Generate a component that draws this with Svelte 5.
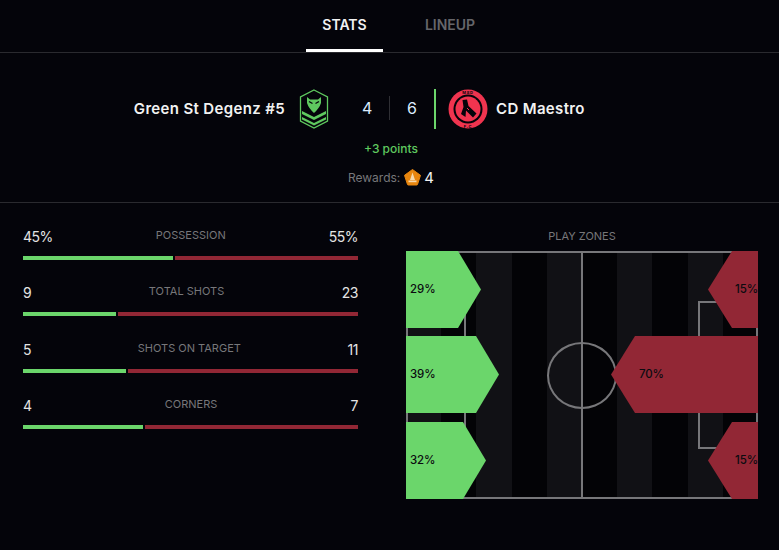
<script>
  const stats = [
    { label: 'Possession', a: '45%', b: '55%', green: 150 },
    { label: 'Total shots', a: '9', b: '23', green: 93 },
    { label: 'Shots on target', a: '5', b: '11', green: 103 },
    { label: 'Corners', a: '4', b: '7', green: 120 }
  ];
  const zones = [
    { cls: 'g', w: 75, top: 0, t: '29%' },
    { cls: 'g', w: 93, top: 85, t: '39%' },
    { cls: 'g', w: 80, top: 171, t: '32%' },
    { cls: 'r', w: 50, top: 0, t: '15%' },
    { cls: 'r mid', w: 147, top: 85, t: '70%' },
    { cls: 'r', w: 50, top: 171, t: '15%' }
  ];
</script>

<div class="page">
  <nav class="tabs">
    <span class="tab active">STATS</span>
    <span class="tab">LINEUP</span>
  </nav>

  <section class="match">
    <div class="teams">
      <div class="team home">
        <span class="name">Green St Degenz #5</span>
        <svg width="30" height="40" viewBox="0 0 30 40" class="badge">
          <path d="M15 1 L28.5 8 V32 L15 39 L1.5 32 V8 Z" fill="none" stroke="#5fc95f" stroke-width="1.3"/>
          <path d="M8 8 L11 10.5 H19 L22 8 L22 14 Q20.5 19 15 24 Q9.5 19 8 14 Z" fill="#5fc95f"/>
          <path d="M10 12.5 L13.5 14.5 M20 12.5 L16.5 14.5" stroke="#04040a" stroke-width="1.4"/>
          <path d="M3 22 L15 28 L27 22 V25 L15 31 L3 25 Z M3 28 L15 34 L27 28 V30.5 L15 36.5 L3 30.5 Z" fill="#5fc95f"/>
        </svg>
      </div>
      <div class="score">
        <span class="num">4</span>
        <i class="sep"></i>
        <span class="num">6</span>
      </div>
      <div class="team away">
        <svg width="40" height="40" viewBox="0 0 40 40">
          <circle cx="20" cy="20" r="19.5" fill="#f0344f"/>
          <circle cx="20" cy="20" r="14.5" fill="#04040a"/>
          <circle cx="20" cy="20" r="12.5" fill="#f0344f"/>
          <path d="M14.5 11 L19 10.5 L20.5 17 L28.5 24.5 L25 28.5 L18 21.5 L17.5 28 L13 25 L15.5 18 Z" fill="#04040a"/>
          <path d="M19 19 L21 21" stroke="#f0344f" stroke-width="1"/>
          <text x="20" y="5" class="mini">MSD</text>
          <text x="20" y="38.6" class="mini">F.C</text>
        </svg>
        <span class="name">CD Maestro</span>
      </div>
    </div>
    <div class="points">+3 points</div>
    <div class="rewards">
      <span>Rewards:</span>
      <svg width="17" height="17" viewBox="0 0 17 17">
        <path d="M8.5 .5 L16.5 6.3 L13.5 15.5 Q13.3 16 12.8 16 H4.2 Q3.7 16 3.5 15.5 L.5 6.3 Z" fill="#e8860f" stroke="#e8860f" stroke-linejoin="round"/>
        <path d="M8.5 3.5 L11 11 H6 Z" fill="#f6d9ad"/>
        <path d="M4.5 11.5 H12.5 V13.2 H4.5 Z" fill="#f6d9ad"/>
      </svg>
      <b>4</b>
    </div>
  </section>

  <section class="body">
    <div class="stats">
      {#each stats as s}
        <div class="row">
          <div class="line">
            <span class="val">{s.a}</span>
            <span class="lbl">{s.label}</span>
            <span class="val">{s.b}</span>
          </div>
          <div class="bar">
            <i class="bg" style="width:{s.green}px"></i>
            <i class="br"></i>
          </div>
        </div>
      {/each}
    </div>

    <div class="zones">
      <div class="ztitle">PLAY ZONES</div>
      <div class="pitch">
        <div class="stripes">
          {#each Array(10) as _, i}
            <i class:alt={i % 2 === 0}></i>
          {/each}
        </div>
        <i class="outline"></i>
        <i class="halfway"></i>
        <i class="circle"></i>
        <i class="box left"></i>
        <i class="box right"></i>
        {#each zones as z}
          <div class="zone {z.cls}" style="top:{z.top}px;width:{z.w}px">
            <span>{z.t}</span>
          </div>
        {/each}
      </div>
    </div>
  </section>
</div>

<style>
  :global(body) {
    margin: 0;
    background: #04040a;
  }
  .page {
    width: 779px;
    height: 550px;
    background: #04040a;
    color: #f2f2f2;
    font-family: Inter, "Liberation Sans", sans-serif;
    overflow: hidden;
  }
  .tabs {
    display: flex;
    gap: 25px;
    height: 52px;
    padding-left: 306px;
    border-bottom: 1px solid #2a2a2f;
  }
  .tab {
    width: 84px;
    text-align: center;
    line-height: 50px;
    font-size: 14px;
    font-weight: 600;
    color: #66666a;
    box-sizing: border-box;
  }
  .tab.active {
    width: 77px;
    color: #f2f2f2;
    border-bottom: 3px solid #fff;
  }
  .match {
    height: 149px;
    border-bottom: 1px solid #2a2a2f;
    display: flex;
    flex-direction: column;
    align-items: center;
  }
  .teams {
    display: grid;
    grid-template-columns: 1fr 93px 1fr;
    width: 100%;
    margin-top: 36px;
    height: 40px;
  }
  .team {
    display: flex;
    align-items: center;
  }
  .home {
    justify-content: flex-end;
    gap: 14px;
    padding-right: 15px;
  }
  .away {
    gap: 8px;
    padding-left: 12px;
  }
  .name {
    font-size: 15px;
    line-height: 18px;
    font-weight: 600;
    letter-spacing: 0.35px;
  }
  .badge {
    margin-right: -1px;
  }
  .score {
    display: flex;
    align-items: center;
    justify-content: space-between;
    padding: 0 17px 2px 19px;
    border-right: 2px solid #6bd66b;
    box-sizing: border-box;
  }
  .num {
    font-size: 16px;
    color: #dcecff;
    width: 10px;
    text-align: center;
  }
  .sep {
    width: 1px;
    height: 24px;
    background: #2f2f34;
  }
  .mini {
    font-size: 4px;
    font-weight: 700;
    fill: #04040a;
    text-anchor: middle;
    letter-spacing: 0.8px;
  }
  .points {
    margin-top: 13px;
    margin-left: 3px;
    font-size: 12px;
    font-weight: 500;
    color: #5fc95f;
    line-height: 14px;
  }
  .rewards {
    margin-top: 12px;
    display: flex;
    align-items: center;
    gap: 4px;
    height: 18px;
    margin-left: 3px;
    font-size: 12px;
    color: #77777a;
  }
  .rewards b {
    font-weight: 400;
    font-size: 15px;
    color: #f2f2f2;
    margin-left: -1px;
  }
  .body {
    display: flex;
    padding: 25px 21px 0 23px;
    gap: 48px;
  }
  .stats {
    width: 335px;
    flex: none;
  }
  .row {
    height: 56.3px;
  }
  .line {
    display: flex;
    justify-content: space-between;
    height: 20px;
    align-items: flex-start;
  }
  .val {
    font-size: 14px;
    line-height: 18px;
    letter-spacing: -0.5px;
    color: #e4e4e4;
  }
  .lbl {
    font-size: 11px;
    line-height: 14px;
    color: #77777a;
    text-transform: uppercase;
  }
  .bar {
    display: flex;
    gap: 2px;
    margin-top: 8px;
    height: 4px;
  }
  .bar i {
    display: block;
  }
  .bg {
    background: #6bd66b;
    flex: none;
  }
  .br {
    background: #922735;
    flex: 1;
  }
  .zones {
    width: 352px;
    flex: none;
  }
  .ztitle {
    text-align: center;
    font-size: 11px;
    line-height: 16px;
    color: #77777a;
    height: 23px;
  }
  .pitch {
    position: relative;
    width: 352px;
    height: 248px;
    overflow: hidden;
  }
  .stripes {
    position: absolute;
    inset: 0;
    display: flex;
  }
  .stripes i {
    flex: 1;
    background: #030306;
  }
  .stripes i.alt {
    background: #111115;
  }
  .outline {
    position: absolute;
    inset: 0;
    border: 2px solid #77777a;
    box-sizing: border-box;
  }
  .halfway {
    position: absolute;
    left: 175px;
    top: 0;
    bottom: 0;
    width: 2px;
    background: #77777a;
  }
  .circle {
    position: absolute;
    left: 141px;
    top: 91px;
    width: 70px;
    height: 67px;
    box-sizing: border-box;
    border: 2px solid #77777a;
    border-radius: 50%;
  }
  .box {
    position: absolute;
    top: 50px;
    width: 60px;
    height: 148px;
    border: 2px solid #77777a;
    box-sizing: border-box;
  }
  .box.left {
    left: 0;
  }
  .box.right {
    right: 0;
  }
  .zone {
    position: absolute;
    height: 77px;
    display: flex;
    align-items: center;
    color: #0b0b10;
    font-size: 11.5px;
    line-height: 14px;
    font-weight: 500;
    letter-spacing: -0.1px;
    box-sizing: border-box;
    padding-bottom: 2px;
  }
  .zone.g {
    left: 0;
    background: #6bd66b;
    padding-left: 4px;
    clip-path: polygon(0 0, calc(100% - 23px) 0, 100% 50%, calc(100% - 23px) 100%, 0 100%);
  }
  .zone.r {
    right: 0;
    background: #922735;
    justify-content: flex-end;
    clip-path: polygon(24px 0, 100% 0, 100% 100%, 24px 100%, 0 50%);
  }
  .zone.mid {
    justify-content: flex-start;
    padding-left: 28px;
  }
</style>
